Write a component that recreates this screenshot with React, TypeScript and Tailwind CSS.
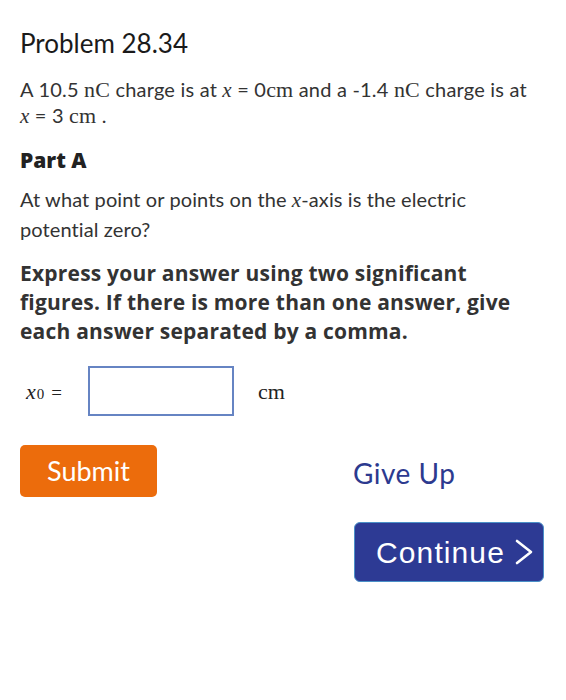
import React from "react";

const sans = { fontFamily: "Lato, 'Open Sans', sans-serif" };
const boldSans = { fontFamily: "'Open Sans', Lato, sans-serif" };
const serif = { fontFamily: "'Liberation Serif', 'DejaVu Serif', serif" };

function MathX() {
  return (
    <span className="italic text-[21px]" style={serif}>
      x
    </span>
  );
}

function Unit({ children }: { children: React.ReactNode }) {
  return (
    <span className="text-[22px]" style={serif}>
      {children}
    </span>
  );
}

export default function App() {
  return (
    <div className="w-[566px] h-[700px] bg-white text-[#333333]" style={sans}>
      <div className="pl-[20px] pr-[22px] pt-[26px]">
        <h1 className="text-[26px] leading-[34px] text-[#1a1a1a]">Problem 28.34</h1>

        <p className="mt-[17px] text-[20px] leading-[25px] tracking-[0.2px]">
          A 10.5 <Unit>nC</Unit> charge is at <MathX /> = 0<Unit>cm</Unit> and a -1.4{" "}
          <Unit>nC</Unit> charge is at
          <br />
          <MathX /> = 3 <Unit>cm</Unit> .
        </p>

        <h2 className="mt-[19px] text-[21px] leading-[25px] font-extrabold text-[#222222]" style={boldSans}>
          Part A
        </h2>

        <p className="mt-[12px] text-[20px] leading-[29px] tracking-[0.1px]">
          At what point or points on the <MathX />-axis is the electric
          <br />
          potential zero?
        </p>

        <p className="mt-[15px] text-[21px] leading-[29px] font-bold tracking-[0.2px]" style={boldSans}>
          Express your answer using two significant
          <br />
          figures. If there is more than one answer, give
          <br />
          each answer separated by a comma.
        </p>

        <div className="mt-[20px] flex items-center">
          <div className="w-[68px] pl-[6px] flex items-baseline text-[#222222]" style={serif}>
            <span className="italic text-[22px]">x</span>
            <span className="text-[15px] ml-[1px]">0</span>
            <span className="text-[19px] ml-[7px]">=</span>
          </div>
          <div className="w-[146px] h-[50px] border-2 border-[#6684c3] bg-white" />
          <span className="ml-[24px] text-[22px] text-[#222222]" style={serif}>
            cm
          </span>
        </div>

        <div className="mt-[29px] flex items-center">
          <button className="w-[137px] h-[52px] rounded-[5px] bg-[#ec6c0c] text-white text-[27px]">
            Submit
          </button>
          <button className="ml-[196px] h-[52px] pt-[3px] text-[28px] tracking-[0.5px] text-[#2c3a8f]">Give Up</button>
        </div>

        <div className="mt-[25px] flex justify-end">
          <button
            className="w-[190px] h-[60px] pl-[12px] rounded-[6px] bg-[#2d3a94] border border-[#4a90c8] text-white text-[30px] tracking-[1.1px] flex items-center justify-center gap-[9px]"
            style={{ fontFamily: "'Liberation Sans', Arial, sans-serif" }}
          >
            <span>Continue</span>
            <svg width="20" height="28" viewBox="0 0 20 28" fill="none">
              <path d="M3 3 L17 14 L3 25" stroke="white" strokeWidth="2.6" strokeLinecap="round" strokeLinejoin="round" />
            </svg>
          </button>
        </div>
      </div>
    </div>
  );
}
